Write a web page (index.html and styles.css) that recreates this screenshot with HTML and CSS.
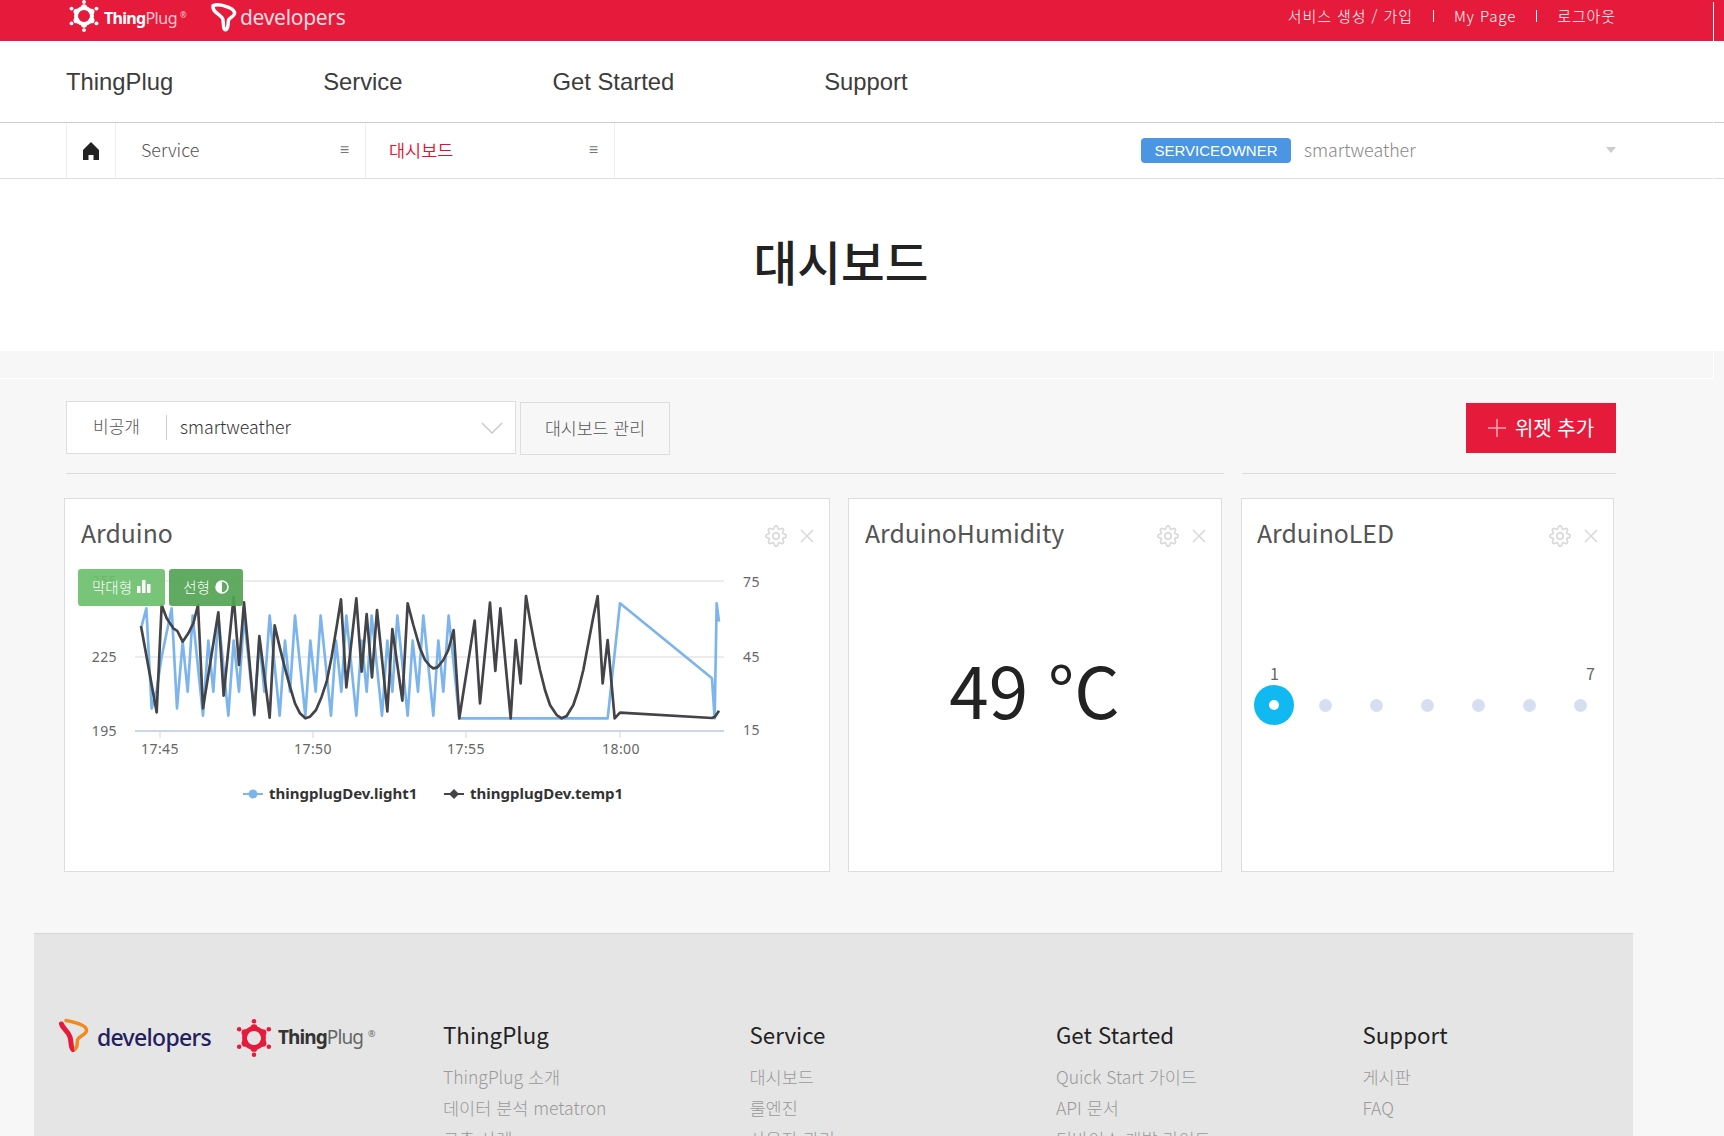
FILE: index.html
```html
<!DOCTYPE html>
<html lang="ko">
<head>
<meta charset="utf-8">
<title>ThingPlug 대시보드</title>
<link rel="stylesheet" href="styles.css">
</head>
<body>
<svg class="defs" width="0" height="0" aria-hidden="true">
  <symbol id="sun" viewBox="-20 -20 40 40">
    <circle r="10" fill="none" stroke="currentColor" stroke-width="5"/>
    <g fill="currentColor">
      <circle cx="0" cy="-11" r="3.6"/><circle cx="9.5" cy="-5.5" r="3.6"/><circle cx="9.5" cy="5.5" r="3.6"/>
      <circle cx="0" cy="11" r="3.6"/><circle cx="-9.5" cy="5.5" r="3.6"/><circle cx="-9.5" cy="-5.5" r="3.6"/>
      <circle cx="0" cy="-17.6" r="2.4"/><circle cx="15.6" cy="-9.3" r="2.4"/><circle cx="15.6" cy="9.3" r="2.4"/>
      <circle cx="0" cy="17.6" r="2.4"/><circle cx="-15.6" cy="9.3" r="2.4"/><circle cx="-15.6" cy="-9.3" r="2.4"/>
    </g>
  </symbol>
  <symbol id="gear" viewBox="0 0 24 24">
    <g fill="none" stroke="#d8d8d8" stroke-width="1.8">
      <circle cx="12" cy="12" r="3.4"/>
      <path d="M19.4 15a1.65 1.65 0 0 0 .33 1.82l.06.06a2 2 0 0 1 0 2.83 2 2 0 0 1-2.83 0l-.06-.06a1.65 1.65 0 0 0-1.82-.33 1.65 1.65 0 0 0-1 1.51V21a2 2 0 0 1-2 2 2 2 0 0 1-2-2v-.09A1.65 1.65 0 0 0 9 19.4a1.65 1.65 0 0 0-1.82.33l-.06.06a2 2 0 0 1-2.83 0 2 2 0 0 1 0-2.83l.06-.06a1.65 1.65 0 0 0 .33-1.82 1.65 1.65 0 0 0-1.51-1H3a2 2 0 0 1-2-2 2 2 0 0 1 2-2h.09A1.65 1.65 0 0 0 4.6 9a1.65 1.65 0 0 0-.33-1.82l-.06-.06a2 2 0 0 1 0-2.83 2 2 0 0 1 2.83 0l.06.06a1.65 1.65 0 0 0 1.82.33H9a1.65 1.65 0 0 0 1-1.51V3a2 2 0 0 1 2-2 2 2 0 0 1 2 2v.09a1.65 1.65 0 0 0 1 1.51 1.65 1.65 0 0 0 1.82-.33l.06-.06a2 2 0 0 1 2.83 0 2 2 0 0 1 0 2.83l-.06.06a1.65 1.65 0 0 0-.33 1.82V9a1.65 1.65 0 0 0 1.51 1H21a2 2 0 0 1 2 2 2 2 0 0 1-2 2h-.09a1.65 1.65 0 0 0-1.51 1z"/>
    </g>
  </symbol>
  <symbol id="close" viewBox="0 0 14 14">
    <path d="M1 1L13 13M13 1L1 13" stroke="#d4d4d4" stroke-width="1.3" fill="none"/>
  </symbol>
</svg>

<header class="topbar">
  <div class="brand">
    <svg class="sun-top"><use href="#sun"/></svg>
    <span class="tp-word"><b>Thing</b>Plug<i>®</i></span>
    <svg class="t-top" viewBox="0 0 30 34">
      <path d="M3 5C8 3 15 5 20 7C25 9 27 11 26.500 14C26 17 21 18 20 21C19 26 20 31 17 31.500C14 32 14.500 25 14 21C13.500 16 6 14 4 10C3 8 2.500 6.500 3 5Z" fill="none" stroke="#fff" stroke-width="3.800"/>
    </svg>
    <span class="dev-word">developers</span>
  </div>
  <nav class="toplinks">
    <a>서비스 생성 / 가입</a><span class="sep"></span><a>My Page</a><span class="sep"></span><a>로그아웃</a>
  </nav>
</header>

<nav class="mainnav">
  <a>ThingPlug</a><a>Service</a><a>Get Started</a><a>Support</a>
</nav>

<div class="crumbs">
  <div class="home-cell">
    <svg width="16" height="18" viewBox="0 0 16 18"><path d="M8 0L16 8V18H10.500V13H5.500V18H0V8Z" fill="#222"/></svg>
  </div>
  <div class="crumb crumb-first"><span>Service</span><em>≡</em></div>
  <div class="crumb crumb-active"><span>대시보드</span><em>≡</em></div>
  <div class="owner">
    <span class="badge">SERVICEOWNER</span>
    <span class="owner-name">smartweather</span>
    <span class="caret"></span>
  </div>
</div>

<section class="page-title"><h1>대시보드</h1></section>
<div class="band"></div>

<main class="content">
  <div class="toolbar">
    <div class="select">
      <span class="vis">비공개</span>
      <span class="sel-name">smartweather</span>
      <svg class="chev" width="22" height="12" viewBox="0 0 22 12"><path d="M1 1L11 11L21 1" fill="none" stroke="#c9c9c9" stroke-width="1.500"/></svg>
    </div>
    <button class="manage">대시보드 관리</button>
    <button class="add"><svg width="18" height="18" viewBox="0 0 18 18"><path d="M9 0V18M0 9H18" stroke="#f9a6b4" stroke-width="1.500"/></svg><span>위젯 추가</span></button>
  </div>
  <div class="rules"><span class="rule-a"></span><span class="rule-b"></span></div>

  <div class="widgets">
    <article class="card">
      <div class="card-head">
        <h2>Arduino</h2>
        <svg class="ic-gear"><use href="#gear"/></svg>
        <svg class="ic-x"><use href="#close"/></svg>
      </div>
      <div class="toggles">
        <span class="tg">막대형
          <svg width="14" height="13" viewBox="0 0 14 13"><path d="M0 6h3.500v7H0zM5 0h3.500v13H5zM10 4h3.500v9H10z" fill="#fff"/></svg>
        </span>
        <span class="tg tg-on">선형
          <svg width="14" height="14" viewBox="0 0 14 14"><circle cx="7" cy="7" r="6" fill="none" stroke="#fff" stroke-width="1.500"/><path d="M7 1a6 6 0 0 0 0 12z" fill="#fff"/></svg>
        </span>
      </div>
      <svg class="chart" width="764" height="270" viewBox="0 0 764 270">
        <g transform="translate(-65,-560)">
          <path class="grid" d="M135 581H724M135 657H724"/>
          <path class="axis" d="M135 731H724"/>
          <path class="tick" d="M160 731V738M313 731V738M466 731V738M620 731V738"/>
          <text class="lb" x="117" y="586" text-anchor="end">255</text>
          <text class="lb" x="117" y="662" text-anchor="end">225</text>
          <text class="lb" x="117" y="736" text-anchor="end">195</text>
          <text class="lb" x="743" y="587">75</text>
          <text class="lb" x="743" y="662">45</text>
          <text class="lb" x="743" y="735">15</text>
          <text class="lb" x="160" y="754" text-anchor="middle">17:45</text>
          <text class="lb" x="313" y="754" text-anchor="middle">17:50</text>
          <text class="lb" x="466" y="754" text-anchor="middle">17:55</text>
          <text class="lb" x="621" y="754" text-anchor="middle">18:00</text>
          <path class="leg-blue" d="M243 794H263"/><circle cx="253" cy="794" r="4.500" fill="#7cb5ec"/>
          <text class="lg" x="269" y="799">thingplugDev.light1</text>
          <path class="leg-dark" d="M444 794H464"/><path d="M454 789L459 794L454 799L449 794Z" fill="#434348"/>
          <text class="lg" x="470" y="799">thingplugDev.temp1</text>
        </g>
        <g transform="translate(-5,-10) scale(.33333)">
          <polyline class="s-blue" points="245,228 259,175 275,475 290,420 305,320 335,175 351,475 368,275 383,425 398,197 429,497 445,272 460,425 475,197 505,497 521,272 537,425 552,197 583,497 598,272 613,425 629,197 659,497 675,272 690,425 705,197 736,497 751,272 767,425 782,197 813,497 828,272 844,425 859,197 889,497 905,272 920,425 935,197 966,497 982,272 997,425 1012,197 1043,497 1058,272 1074,425 1090,197 1120,497 1135,272 1150,425 1166,197 1198,505 1643,505 1680,160 1956,385 1964,505 1970,160 1977,215"/>
          <polyline class="s-dark" points="243,228 290,487 305,165 320,205 340,235 352,243 368,275 385,250 400,220 414,165 429,475 475,187 491,437 521,140 537,345 552,157 583,493 598,258 629,503 644,226 660,295 675,355 690,410 705,460 720,490 736,505 750,500 768,480 785,440 800,395 815,320 830,230 843,148 859,412 889,145 905,365 920,192 936,382 951,180 982,484 997,237 1027,452 1043,160 1060,225 1080,295 1095,330 1110,348 1120,355 1132,352 1150,330 1165,300 1181,240 1198,505 1244,212 1260,460 1290,158 1306,363 1321,175 1352,505 1367,270 1382,400 1398,138 1410,210 1425,290 1440,360 1455,420 1470,465 1490,495 1505,505 1520,498 1540,465 1555,420 1570,360 1585,280 1600,200 1613,138 1628,400 1643,270 1664,505 1680,488 1956,504 1965,500 1977,482"/>
        </g>
      </svg>
    </article>

    <article class="card">
      <div class="card-head">
        <h2>ArduinoHumidity</h2>
        <svg class="ic-gear"><use href="#gear"/></svg>
        <svg class="ic-x"><use href="#close"/></svg>
      </div>
      <div class="value">49 °C</div>
    </article>

    <article class="card card-led">
      <div class="card-head">
        <h2>ArduinoLED</h2>
        <svg class="ic-gear"><use href="#gear"/></svg>
        <svg class="ic-x"><use href="#close"/></svg>
      </div>
      <div class="led">
        <div class="led-labels"><span>1</span><span>7</span></div>
        <div class="led-track">
          <span class="dot-on"></span><span class="dot"></span><span class="dot"></span><span class="dot"></span><span class="dot"></span><span class="dot"></span><span class="dot"></span>
        </div>
      </div>
    </article>
  </div>
</main>

<footer class="footer">
  <div class="foot-logos">
    <svg class="t-foot" viewBox="0 0 30 34">
      <path d="M2.500 6C4 11 9 13 11 19C12.500 24 11.500 30 14 31.500" fill="none" stroke="#e61a3a" stroke-width="5" stroke-linecap="round"/>
      <path d="M7 2.500C12 3.500 27 6 27.500 12C28 17 20 17.500 18.500 22C18 25 19 28 16.500 31" fill="none" stroke="#f08a1c" stroke-width="3.500" stroke-linecap="round"/>
    </svg>
    <span class="dev-foot">developers</span>
    <svg class="sun-foot"><use href="#sun"/></svg>
    <span class="tp-foot"><b>Thing</b>Plug<i>®</i></span>
  </div>
  <div class="foot-col">
    <h3>ThingPlug</h3>
    <a>ThingPlug 소개</a><a>데이터 분석 metatron</a><a>구축 사례</a>
  </div>
  <div class="foot-col">
    <h3>Service</h3>
    <a>대시보드</a><a>룰엔진</a><a>사용자 관리</a>
  </div>
  <div class="foot-col">
    <h3>Get Started</h3>
    <a>Quick Start 가이드</a><a>API 문서</a><a>디바이스 개발 가이드</a>
  </div>
  <div class="foot-col">
    <h3>Support</h3>
    <a>게시판</a><a>FAQ</a>
  </div>
</footer>
<div class="seam"></div>
</body>
</html>
```

FILE: styles.css
```css
* { box-sizing: border-box; }
html, body { margin: 0; height: 1136px; overflow: hidden; }
body {
  position: relative;
  background: #f7f7f7;
  color: #333;
  font-family: "Noto Sans CJK KR", "Noto Sans", sans-serif;
}
.defs { position: absolute; }
a { color: inherit; text-decoration: none; }
h1, h2, h3 { margin: 0; font-weight: 400; }
button { font-family: inherit; padding: 0; cursor: pointer; }

/* top bar */
.topbar {
  height: 41px;
  background: #e61a3a;
  color: #fff;
  display: flex;
  align-items: center;
  justify-content: space-between;
  padding: 0 108px 0 68px;
}
.brand { display: flex; align-items: center; height: 41px; }
.sun-top { width: 32px; height: 34px; color: #fff; margin-top: -9px; }
.tp-word {
  margin-left: 4px; width: 106px; flex: none;
  font-size: 16px; letter-spacing: -.5px; color: #f9c8d0; margin-top: -6px;
  font-family: "Noto Sans", sans-serif;
}
.tp-word b { color: #fff; font-weight: 700; letter-spacing: -.7px; }
.tp-word i { font-style: normal; font-size: 8px; vertical-align: 6px; margin-left: 3px; }
.t-top { width: 28px; height: 31px; margin-top: -8px; flex: none; }
.dev-word {
  margin-left: 2px; font-size: 21px; color: #fbdde2; margin-top: -8px;
  font-family: "Noto Sans", sans-serif; letter-spacing: -.3px;
}
.toplinks {
  display: flex; align-items: center; font-size: 15px; margin-top: -10px;
  font-weight: 300; letter-spacing: .9px;
}
.sep { width: 1px; height: 12px; background: #fff; margin: 0 20px; }

/* main nav */
.mainnav {
  height: 82px;
  background: #fff;
  border-bottom: 1px solid #ccc;
  display: flex;
  align-items: center;
  gap: 150px;
  padding: 0 0 0 66px;
  font-family: "Liberation Sans", sans-serif;
  font-size: 23.800px;
  color: #3c3c3c;
}

/* breadcrumb */
.crumbs {
  height: 56px;
  background: #fff;
  border-bottom: 1px solid #ddd;
  display: flex;
  padding: 0 109px 0 66px;
  font-size: 17.800px;
  color: #555;
  font-weight: 300;
}
.home-cell {
  width: 50px;
  border-left: 1px solid #eee;
  border-right: 1px solid #eee;
  display: flex; align-items: center; justify-content: center;
}
.crumb {
  width: 249px;
  border-right: 1px solid #eee;
  display: flex; align-items: center; justify-content: space-between;
  padding: 0 16px 3px 25px;
}
.crumb-first { width: 250px; }
.crumb em { font-style: normal; font-size: 16px; color: #777; font-weight: 300; font-family: "DejaVu Sans", sans-serif; }
.crumb-active { color: #e6102f; padding: 0 16px 3px 23px; font-size: 17.500px; font-weight: 350; }
.owner { margin-left: auto; display: flex; align-items: center; width: 474px; }
.badge {
  width: 150px; height: 25px; border-radius: 4px;
  background: #4a96e2; color: #fff;
  font: 15px/25px "Liberation Sans", sans-serif; text-align: center;
}
.owner-name { margin-left: 13px; color: #888; padding-bottom: 3px; }
.caret {
  margin-left: auto; margin-right: -1px; margin-top: -2px;
  border: 5px solid transparent; border-top: 6px solid #ccc; border-bottom: 0;
}

/* title */
.page-title {
  height: 172px; background: #fff;
  display: flex; align-items: center; justify-content: center;
  padding: 0 42px 8px 0;
}
.page-title h1 { font-size: 47.500px; font-weight: 500; color: #222; line-height: 1; }
.band { height: 28px; width: 1714px; border-right: 1px solid #fff; border-bottom: 1px solid #fff; }

/* content */
.content { padding: 22px 108px 0 64px; }
.toolbar { display: flex; align-items: flex-start; margin-left: 2px; height: 53px; }
.select {
  width: 450px; height: 53px;
  background: #fff; border: 1px solid #ddd;
  display: flex; align-items: center; position: relative;
  font-size: 17.700px; font-weight: 300;
}
.vis {
  width: 100px; padding-left: 26px; height: 25px; line-height: 22px;
  border-right: 1px solid #ccc; color: #555; font-size: 17px;
}
.sel-name { margin-left: 13px; color: #333; padding-bottom: 3px; }
.chev { position: absolute; right: 12px; top: 20px; }
.manage {
  width: 150px; height: 53px; margin: 1px 0 0 4px;
  background: #f7f7f7; border: 1px solid #ddd; color: #555;
  font-size: 17.300px; font-weight: 300; padding-bottom: 2px;
}
.add {
  margin: 2px 0 0 auto;
  width: 150px; height: 50px;
  background: #e61a3a; border: 0; color: #fff;
  font-size: 20px; display: flex; align-items: center; justify-content: center; gap: 9px;
}
.add span { padding-bottom: 2px; }
.rules { display: flex; gap: 18px; margin: 19px 0 0 2px; }
.rule-a { width: 1158px; height: 1px; background: #ddd; }
.rule-b { flex: 1; height: 1px; background: #ddd; }

.widgets {
  display: grid;
  grid-template-columns: 766px 374px 374px;
  column-gap: 18px;
  margin-top: 24px;
}
.card {
  position: relative;
  height: 374px;
  background: #fff;
  border: 1px solid #ddd;
}
.card-led { margin-left: 1px; }
.card-head { height: 61px; display: flex; align-items: flex-start; padding: 16px 0 0 16px; position: relative; }
.card-head h2 { font-size: 24.800px; line-height: 35px; color: #555; font-weight: 400; }
.card-led .card-head { padding-left: 15px; }
.ic-gear { position: absolute; right: 42px; top: 26px; width: 22px; height: 22px; }
.ic-x { position: absolute; right: 15px; top: 30px; width: 14px; height: 14px; }

.toggles { position: absolute; left: 13px; top: 70px; display: flex; gap: 4px; z-index: 2; }
.tg {
  height: 37px; width: 87px; border-radius: 3px;
  background: rgba(108, 191, 108, .92); color: #fff;
  font-size: 14.500px; font-weight: 300; padding-bottom: 2px;
  display: flex; align-items: center; justify-content: center; gap: 5px;
}
.tg-on { width: 74px; background: rgba(84, 163, 84, .92); }
.chart { display: block; }
.grid { stroke: #e6e6e6; stroke-width: 1.500; fill: none; }
.axis { stroke: #ccd6eb; stroke-width: 2; fill: none; }
.tick { stroke: #ccd6eb; stroke-width: 1; fill: none; }
.lb { font: 14px "Noto Sans", sans-serif; fill: #666; letter-spacing: .4px; }
.lg { font: 700 15px "Noto Sans", sans-serif; fill: #333; }
.s-blue { fill: none; stroke: #7cb5ec; stroke-width: 8; stroke-linejoin: round; }
.s-dark { fill: none; stroke: #434348; stroke-width: 8; stroke-linejoin: round; }
.leg-blue { stroke: #7cb5ec; stroke-width: 2; }
.leg-dark { stroke: #434348; stroke-width: 2; }

.value {
  text-align: center; font-size: 71px; line-height: 90px; color: #222;
  margin-top: 83px; padding-right: 1px;
}

.led { padding: 0 0 0 12px; margin-top: 101px; position: relative; }
.led-labels {
  display: flex; justify-content: space-between; padding: 0 18px 0 16px;
  font-size: 16px; color: #666; line-height: 24px;
}
.led-track { display: flex; align-items: center; height: 40px; margin-top: 0; }
.dot-on {
  width: 40px; height: 40px; border-radius: 50%; background: #10b9f1; position: relative; flex: none;
}
.dot-on::after {
  content: ""; position: absolute; left: 15px; top: 15px; width: 10px; height: 10px;
  border-radius: 50%; background: #fff;
}
.dot { width: 13px; height: 13px; border-radius: 50%; background: #d6dff2; margin-left: 38px; flex: none; }
.dot-on + .dot { margin-left: 25px; }

/* footer */
.footer {
  position: absolute; left: 34px; top: 933px;
  width: 1599px; height: 203px;
  background: #e5e5e5; border-top: 1px solid #d5d5d5;
  display: flex; overflow: hidden;
  padding-top: 84px;
}
.foot-logos { width: 409px; flex: none; display: flex; align-items: flex-start; padding-left: 25px; height: 42px; }
.t-foot { width: 30px; height: 34px; flex: none; }
.dev-foot {
  margin: 3px 0 0 8px; font: 500 23px/32px "Noto Sans", sans-serif; color: #23205f; letter-spacing: -.7px; width: 119px; flex: none;
}
.sun-foot { width: 38px; height: 40px; color: #e61a3a; flex: none; margin-left: 19px; }
.tp-foot { margin: 0 0 0 5px; font: 19px/32px "Noto Sans", sans-serif; color: #666; letter-spacing: -.9px; white-space: nowrap; }
.tp-foot b { color: #333; font-weight: 700; }
.tp-foot i { font-style: normal; font-size: 9px; vertical-align: 7px; margin-left: 5px; }
.foot-col { width: 306.500px; flex: none; display: flex; flex-direction: column; margin-top: -2px; }
.foot-col h3 { font-size: 22.300px; line-height: 36px; color: #222; margin-bottom: 9px; }
.foot-col a { font-size: 17.500px; line-height: 31px; color: #999; font-weight: 300; }

.seam { position: absolute; left: 1713px; top: 2px; width: 1px; height: 177px; background: #fff; }
```
